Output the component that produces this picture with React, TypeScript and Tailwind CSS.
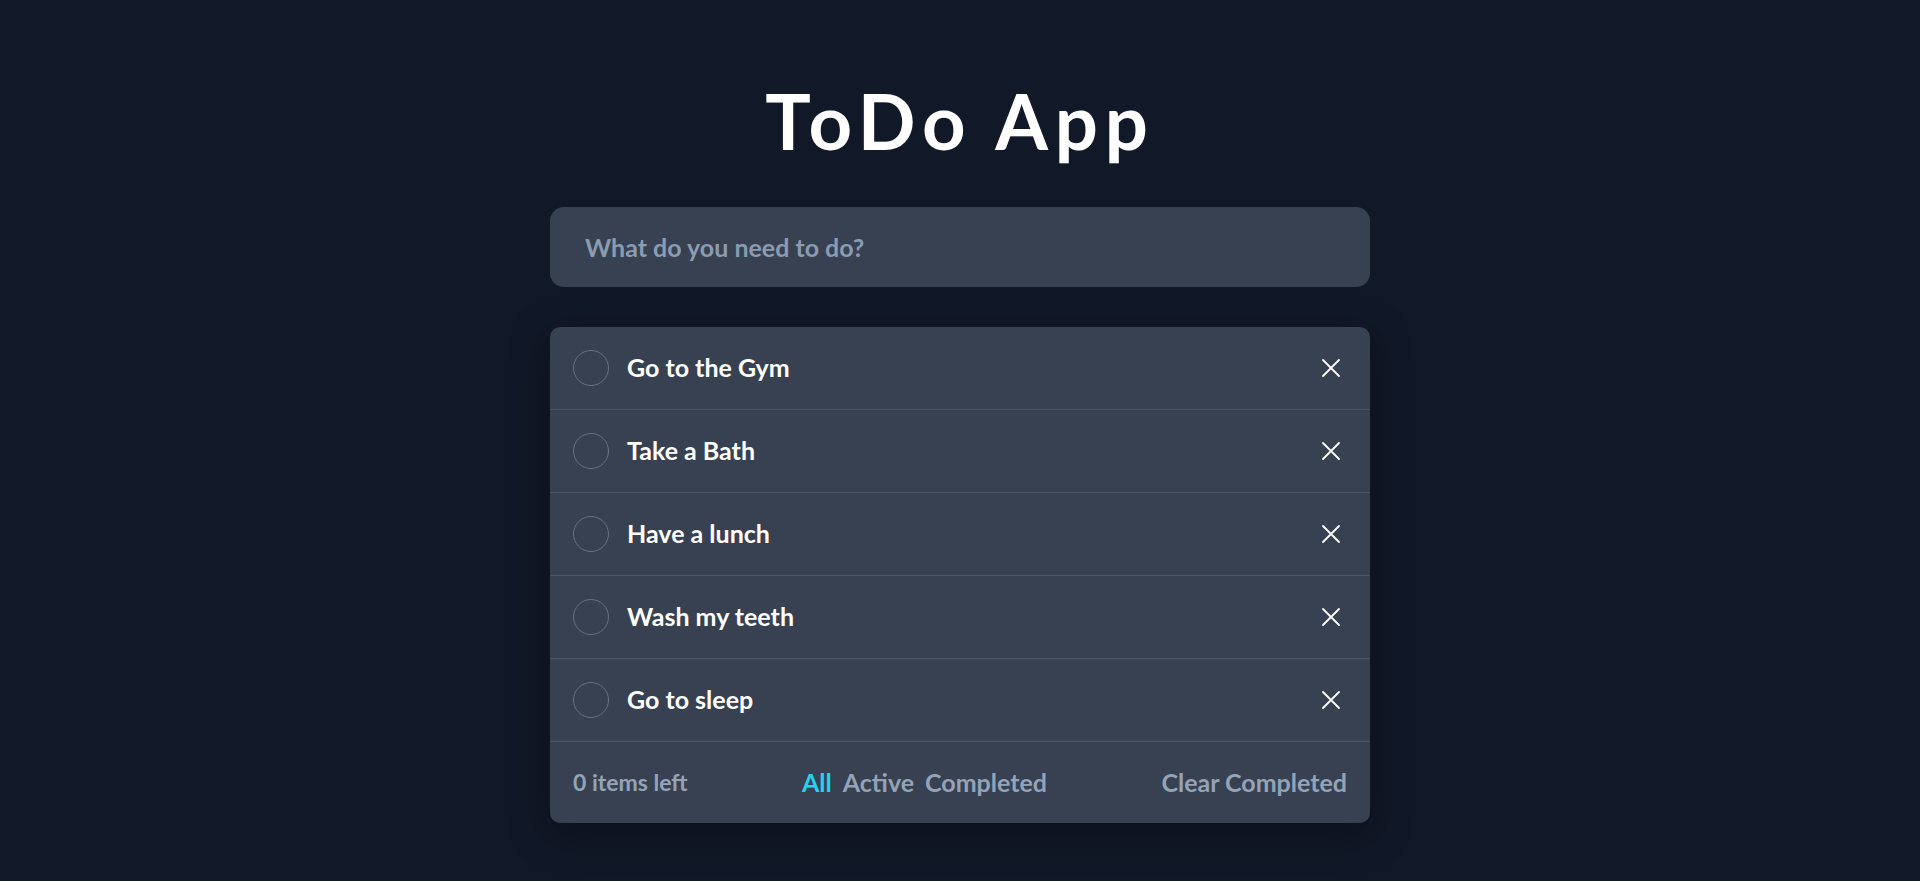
import { useState } from "react";

type Todo = { id: number; text: string; done: boolean };

const initialTodos: Todo[] = [
  { id: 1, text: "Go to the Gym", done: false },
  { id: 2, text: "Take a Bath", done: false },
  { id: 3, text: "Have a lunch", done: false },
  { id: 4, text: "Wash my teeth", done: false },
  { id: 5, text: "Go to sleep", done: false },
];

function CloseIcon() {
  return (
    <svg width="20" height="20" viewBox="0 0 20 20" fill="none" stroke="currentColor" strokeWidth="1.8" strokeLinecap="round">
      <path d="M2 2 L18 18 M18 2 L2 18" />
    </svg>
  );
}

export default function App() {
  const [todos, setTodos] = useState<Todo[]>(initialTodos);
  const [filter, setFilter] = useState<"all" | "active" | "completed">("all");
  const [draft, setDraft] = useState("");

  const visible = todos.filter((t) =>
    filter === "all" ? true : filter === "active" ? !t.done : t.done
  );

  return (
    <div
      className="min-h-screen bg-[#111827] flex flex-col items-center pt-[83px] pb-16"
      style={{ fontFamily: "Lato, 'Noto Sans', sans-serif" }}
    >
      <h1 className="text-white text-[76px] leading-none font-bold tracking-[0.09em] mb-[48px]">
        ToDo App
      </h1>

      <input
        value={draft}
        onChange={(e) => setDraft(e.target.value)}
        onKeyDown={(e) => {
          if (e.key === "Enter" && draft.trim()) {
            setTodos([...todos, { id: Date.now(), text: draft.trim(), done: false }]);
            setDraft("");
          }
        }}
        placeholder="What do you need to do?"
        className="w-[820px] h-[80px] rounded-[14px] bg-[#374151] px-[35px] text-[25px] font-bold text-white placeholder:text-[#8b9bb0] outline-none"
      />

      <div className="mt-[40px] w-[820px] rounded-[10px] bg-[#374151] shadow-[0_10px_40px_rgba(0,0,0,0.35)] overflow-hidden">
        {visible.map((todo) => (
          <div
            key={todo.id}
            className="flex items-center h-[83px] px-[23px] border-b border-[#4b5563]"
          >
            <button
              onClick={() =>
                setTodos(todos.map((t) => (t.id === todo.id ? { ...t, done: !t.done } : t)))
              }
              className="w-[36px] h-[36px] rounded-full border border-[#6b7280] shrink-0"
            />
            <span
              className={`ml-[18px] text-[25px] font-bold ${
                todo.done ? "text-gray-400 line-through" : "text-white"
              }`}
            >
              {todo.text}
            </span>
            <button
              onClick={() => setTodos(todos.filter((t) => t.id !== todo.id))}
              className="ml-auto mr-[6px] text-white"
            >
              <CloseIcon />
            </button>
          </div>
        ))}

        <div className="flex items-center justify-between h-[81px] px-[23px]">
          <span className="text-[23px] font-bold text-[#94a3b8]">
            {todos.filter((t) => t.done).length} items left
          </span>
          <div className="flex items-center gap-[11px] text-[25px] font-bold">
            <button
              onClick={() => setFilter("all")}
              className={filter === "all" ? "text-[#22d3ee]" : "text-[#94a3b8]"}
            >
              All
            </button>
            <button
              onClick={() => setFilter("active")}
              className={filter === "active" ? "text-[#22d3ee]" : "text-[#94a3b8]"}
            >
              Active
            </button>
            <button
              onClick={() => setFilter("completed")}
              className={filter === "completed" ? "text-[#22d3ee]" : "text-[#94a3b8]"}
            >
              Completed
            </button>
          </div>
          <button
            onClick={() => setTodos(todos.filter((t) => !t.done))}
            className="text-[25px] font-bold text-[#94a3b8]"
          >
            Clear Completed
          </button>
        </div>
      </div>
    </div>
  );
}
